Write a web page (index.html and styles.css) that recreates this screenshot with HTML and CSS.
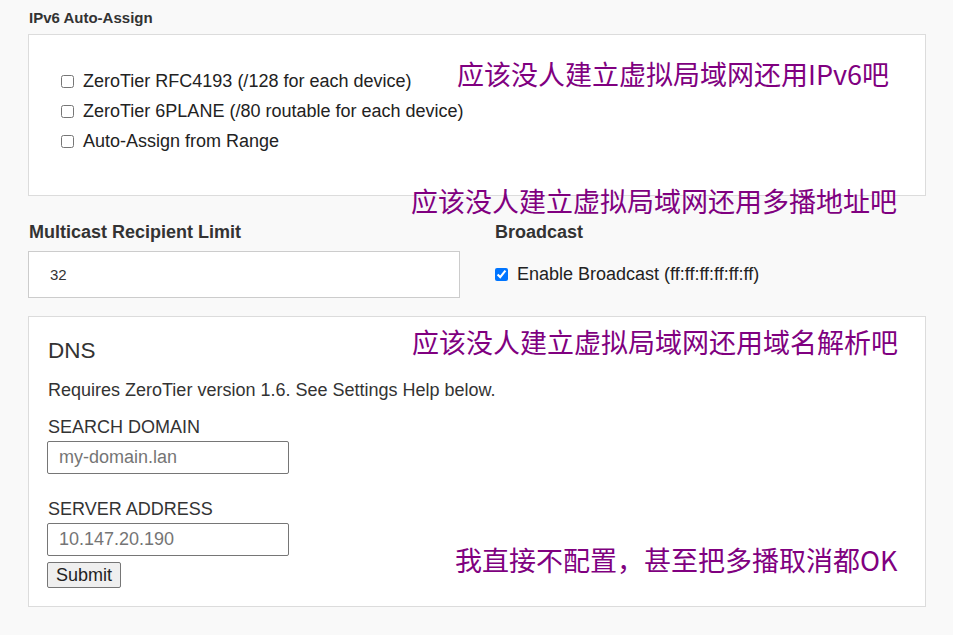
FILE: index.html
```html
<!DOCTYPE html>
<html lang="zh-CN">
<head>
<meta charset="utf-8">
<title>Network settings</title>
<link rel="stylesheet" href="styles.css">
</head>
<body>
<div class="page">
  <div class="section-label">IPv6 Auto-Assign</div>
  <div class="panel ipv6">
    <label class="check-row"><input type="checkbox">ZeroTier RFC4193 (/128 for each device)</label>
    <label class="check-row"><input type="checkbox">ZeroTier 6PLANE (/80 routable for each device)</label>
    <label class="check-row"><input type="checkbox">Auto-Assign from Range</label>
  </div>

  <div class="two-col">
    <div class="col">
      <div class="field-label">Multicast Recipient Limit</div>
      <input class="text-input" type="text" value="32">
    </div>
    <div class="col">
      <div class="field-label right">Broadcast</div>
      <label class="check-row broadcast"><input type="checkbox" checked>Enable Broadcast (ff:ff:ff:ff:ff:ff)</label>
    </div>
  </div>

  <div class="panel dns">
    <h2 class="dns-title">DNS</h2>
    <p class="dns-note">Requires ZeroTier version 1.6. See Settings Help below.</p>
    <div class="dns-label first">SEARCH DOMAIN</div>
    <input class="dns-input" type="text" placeholder="my-domain.lan">
    <div class="dns-label">SERVER ADDRESS</div>
    <input class="dns-input" type="text" placeholder="10.147.20.190">
    <button class="submit" type="button">Submit</button>
  </div>

  <div class="note note-1">应该没人建立虚拟局域网还用IPv6吧</div>
  <div class="note note-2">应该没人建立虚拟局域网还用多播地址吧</div>
  <div class="note note-3">应该没人建立虚拟局域网还用域名解析吧</div>
  <div class="note note-4">我直接不配置，甚至把多播取消都OK</div>
</div>
</body>
</html>
```

FILE: styles.css
```css
html, body {
  margin: 0;
  padding: 0;
  background: #f9f9f9;
}

body {
  font-family: "Liberation Sans", Arial, sans-serif;
  color: #333;
}

.page {
  position: relative;
  width: 898px;
  margin: 0 0 0 28px;
  padding-top: 8px;
  padding-bottom: 28px;
}

.section-label {
  font-size: 15px;
  font-weight: bold;
  line-height: 20px;
  padding-left: 1px;
}

.panel {
  background: #fff;
  border: 1px solid #dcdcdc;
}

.ipv6 {
  margin-top: 6px;
  padding: 31px 20px 39px 28px;
}

.check-row {
  display: flex;
  align-items: center;
  height: 30px;
  font-size: 18px;
  color: #222;
  white-space: nowrap;
}

.check-row input {
  margin: 0 9px 0 4px;
  width: 13px;
  height: 13px;
  flex: none;
}

.two-col {
  display: grid;
  grid-template-columns: 431px 431px;
  column-gap: 36px;
  margin-top: 25px;
}

.field-label {
  font-size: 18px;
  font-weight: bold;
  line-height: 22px;
  padding-left: 1px;
}

.field-label.right {
  padding-left: 0;
}

.text-input {
  display: block;
  box-sizing: border-box;
  width: 432px;
  height: 47px;
  margin: 8px 0 0;
  padding: 0 21px;
  border: 1px solid #ccc;
  background: #fff;
  font-family: "Liberation Sans", Arial, sans-serif;
  font-size: 15px;
  color: #333;
  outline: none;
}

.broadcast {
  height: 47px;
  margin-top: 8px;
}

.broadcast input {
  margin-left: 0;
  margin-right: 9px;
}

.dns {
  margin-top: 18px;
  padding: 18px 19px 18px 18px;
}

.dns-title {
  margin: 0;
  padding-left: 1px;
  font-size: 22.5px;
  font-weight: normal;
  line-height: 31px;
}

.dns-note {
  margin: 13px 0 0;
  padding-left: 1px;
  font-size: 18px;
  line-height: 23px;
}

.dns-label {
  margin-top: 24px;
  padding-left: 1px;
  font-size: 18px;
  line-height: 22px;
}

.dns-label.first {
  margin-top: 14px;
}

.dns-input {
  display: block;
  box-sizing: border-box;
  width: 242px;
  height: 33px;
  margin: 3px 0 0;
  padding: 0 11px;
  border: 1px solid #767676;
  border-radius: 2px;
  background: #fff;
  font-family: "Liberation Sans", Arial, sans-serif;
  font-size: 18px;
  outline: none;
}

.dns-input::placeholder {
  color: #757575;
}

.submit {
  display: block;
  margin-top: 6px;
  height: 26px;
  padding: 0 8px;
  font-family: "Liberation Sans", Arial, sans-serif;
  font-size: 18px;
  color: #222;
  background: #efefef;
  border: 1px solid #767676;
  border-radius: 2px;
}

.note {
  position: absolute;
  font-family: "Noto Sans CJK SC", "Microsoft YaHei", sans-serif;
  font-size: 27px;
  line-height: 32px;
  color: #800080;
  white-space: nowrap;
}

.note-1 { left: 429px; top: 58px; }
.note-2 { left: 383px; top: 185px; }
.note-3 { left: 384px; top: 326px; }
.note-4 { left: 427px; top: 544px; }
```
